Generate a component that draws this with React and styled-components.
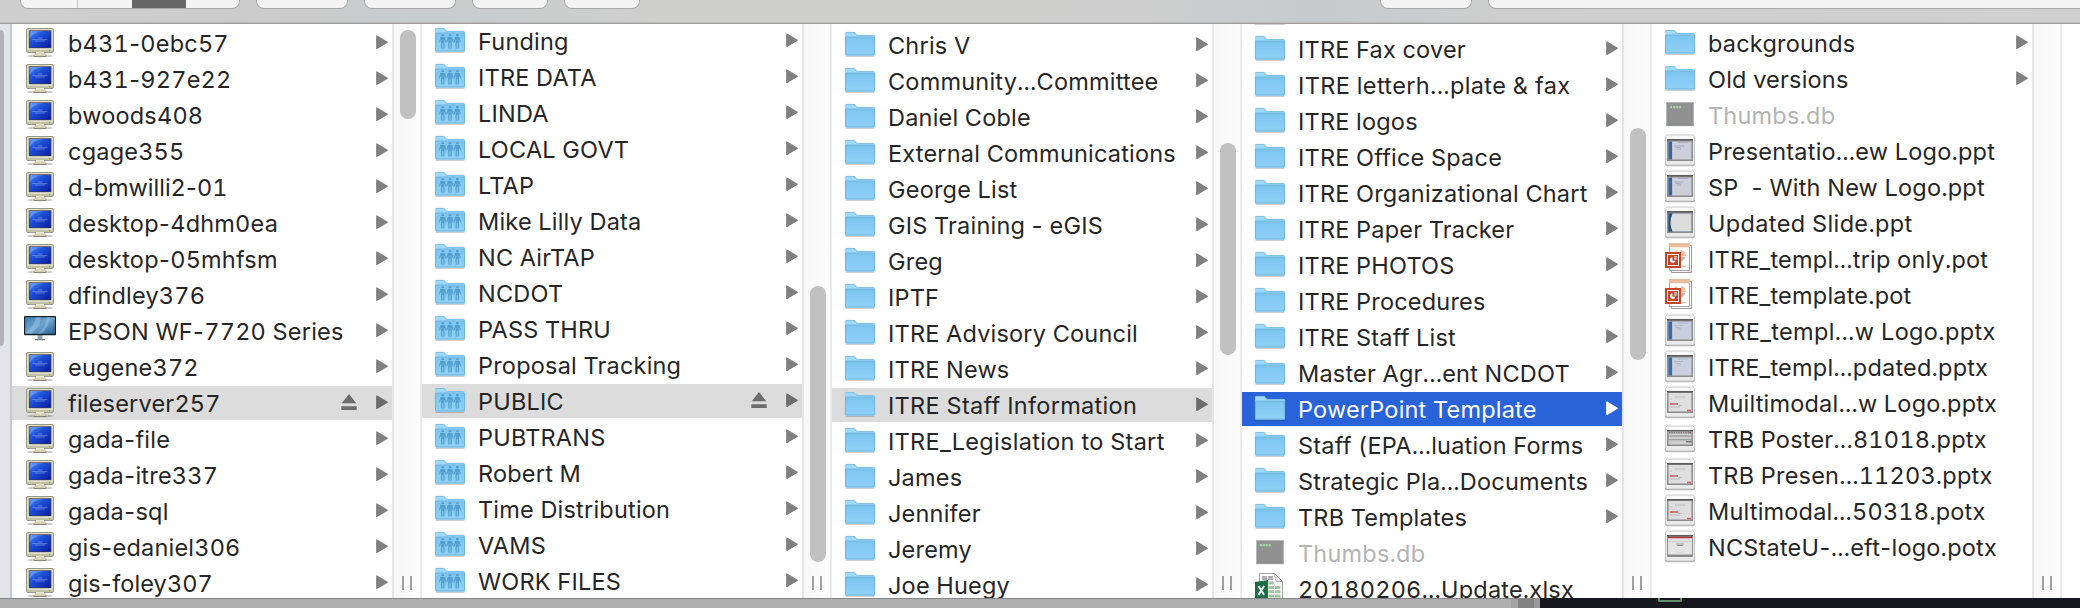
import React from "react";
import styled, { createGlobalStyle } from "styled-components";

const Global = createGlobalStyle`
  html, body { margin: 0; padding: 0; background: #fff; }
  body { width: 2080px; height: 608px; overflow: hidden; font-family: Inter, "Liberation Sans", sans-serif; }
  * { box-sizing: border-box; }
`;

const Window = styled.div`
  width: 2080px;
  height: 608px;
  display: flex;
  flex-direction: column;
  overflow: hidden;
`;

const Toolbar = styled.header`
  height: 24px;
  flex: none;
  display: flex;
  align-items: flex-start;
  gap: 16px;
  padding-left: 20px;
  background: linear-gradient(90deg, #cfcfcf, #cbcbcb 15%, #c8cccd 20%, #cfcfce 32%, #cfcfcf 55%, #c6cacc 63%, #cecece 72%, #cfcfcf);
  border-bottom: 1px solid #9d9d9d;
  box-shadow: inset 0 -1px 0 #bdbdbd;
`;

const Button = styled.div`
  flex: none;
  display: flex;
  width: ${(p) => p.$w}px;
  height: 9px;
  margin-left: ${(p) => p.$gap || 0}px;
  border: 1px solid #a9a9a9;
  border-top: 0;
  border-radius: 0 0 8px 8px;
  background: #f4f4f4;
  overflow: hidden;
`;

const Segment = styled.div`
  width: ${(p) => p.$w}px;
  height: 9px;
  background: ${(p) => (p.$active ? "#666" : "transparent")};
  border-right: ${(p) => (p.$line ? "1px solid #c4c4c4" : "0")};
`;

const Browser = styled.main`
  height: 574px;
  flex: none;
  display: flex;
  background: #fff;
`;

const Sidebar = styled.aside`
  width: 12px;
  flex: none;
  padding-top: 6px;
  background: #e3e4e9;
  border-right: 2px solid #c7c8cd;
`;

const SidebarThumb = styled.div`
  width: 4px;
  height: 316px;
  border-radius: 0 6px 6px 0;
  background: #b1b1b4;
`;

const Column = styled.section`
  width: 410px;
  flex: none;
  display: flex;
`;

const List = styled.div`
  width: 380px;
  height: 574px;
  padding-top: ${(p) => p.$top}px;
  overflow: hidden;
  display: flex;
  flex-direction: column;
  gap: 2px;
`;

const PreviousEdge = styled.div`
  height: 1px;
  width: 30px;
  margin: 0 0 5px 13px;
  flex: none;
  background: #cfd3d6;
`;

const tones = {
  blue: { bg: "#2863d9", text: "#fff", mark: "#fff" },
  gray: { bg: "#dcdcdc", text: "#242424", mark: "#6d6d6d" },
  dim: { bg: "transparent", text: "#b4b4b4", mark: "#808080" },
  plain: { bg: "transparent", text: "#262626", mark: "#808080" },
};

const Row = styled.div`
  height: 34px;
  flex: none;
  display: flex;
  align-items: flex-start;
  padding-left: 11px;
  background: ${(p) => tones[p.$tone].bg};
  color: ${(p) => tones[p.$tone].text};
`;

const Name = styled.span`
  flex: 1;
  margin-left: 11px;
  font-size: 23.5px;
  line-height: 35px;
  font-variant-numeric: tabular-nums;
  letter-spacing: ${(p) => p.$track}px;
  white-space: pre;
`;

const Hyphen = styled.span`
  margin: 0 -2px;
`;

const Icon = styled.svg`
  display: block;
  flex: none;
  width: 34px;
  height: 34px;
`;

const Mark = styled.svg`
  display: block;
  flex: none;
  width: ${(p) => p.$w}px;
  height: 34px;
  margin-right: ${(p) => p.$right}px;
`;

const Scroller = styled.div`
  width: 30px;
  flex: none;
  display: flex;
  flex-direction: column;
  align-items: flex-start;
  background: linear-gradient(90deg, #f8f8f8, #fcfcfc);
  border-left: 2px solid #e6e6e6;
  border-right: 2px solid #ebebeb;
`;

const Thumb = styled.div`
  width: 16px;
  height: ${(p) => p.$h}px;
  margin-top: ${(p) => p.$top}px;
  margin-left: 6px;
  border-radius: 8px;
  background: #c1c1c1;
`;

const Grip = styled.div`
  width: 10px;
  height: 14px;
  margin: auto 0 8px 8px;
  border-left: 2px solid #a0a0a0;
  border-right: 2px solid #a0a0a0;
`;

const Footer = styled.footer`
  height: 10px;
  flex: none;
  display: flex;
  background: #17181d;
`;

const Shelf = styled.div`
  width: ${(p) => p.$w}px;
  height: 10px;
  background: ${(p) => p.$bg};
  border-top: 1px solid #858585;
`;

const DesktopChip = styled.div`
  width: 24px;
  height: 4px;
  margin-left: 118px;
  border: 2px solid #5c8f6b;
  border-top: 0;
  border-radius: 0 0 2px 2px;
`;

const Defs = styled.svg`
  position: absolute;
  width: 0;
  height: 0;
`;

function Gradients() {
  return (
    <Defs>
      <defs>
        <linearGradient id="screen" x1="0" y1="0" x2="1" y2="1">
          <stop offset="0" stopColor="#4f86f0" />
          <stop offset=".4" stopColor="#1f4fd8" />
          <stop offset="1" stopColor="#0a1a9c" />
        </linearGradient>
        <linearGradient id="lcd" x1="0" y1="0" x2="1" y2="1">
          <stop offset="0" stopColor="#3f7fb6" />
          <stop offset=".5" stopColor="#6ea6cf" />
          <stop offset="1" stopColor="#2b5f96" />
        </linearGradient>
        <linearGradient id="folder" x1="0" y1="0" x2="0" y2="1">
          <stop offset="0" stopColor="#7cc5f0" />
          <stop offset="1" stopColor="#8fd1f8" />
        </linearGradient>
        <linearGradient id="frame" x1="0" y1="0" x2="0" y2="1">
          <stop offset="0" stopColor="#fbfbfb" />
          <stop offset="1" stopColor="#e9e9e9" />
        </linearGradient>
      </defs>
    </Defs>
  );
}

/* Every icon is drawn in a 34x34 box whose left edge is 11px into the column. */
function Crt() {
  return (
    <Icon viewBox="0 0 34 34">
      <ellipse cx="17" cy="30" rx="13" ry="1.3" fill="#000" opacity=".22" />
      <path d="M12 26h10l1 2.6 2 .8v.9H9.500v-.9l2-.8z" fill="#d2cfb6" />
      <path d="M10.500 29.500q6.500 2 13 0v.9q-6.500 1.400-13 0z" fill="#6d6b5c" />
      <rect x="3.500" y="2.500" width="27" height="24" rx="1.500" fill="#dfdcc4" stroke="#9a977f" />
      <path d="M4 24h26v2H4z" fill="#c4c1a6" />
      <path d="M13 26h8v1.500h-8z" fill="#eceadb" />
      <rect x="5" y="3.700" width="24" height="19.300" fill="#eeecd8" />
      <rect x="5.800" y="4.300" width="22.600" height="17.900" fill="#343b56" />
      <rect x="6.600" y="5.100" width="21" height="16.300" fill="url(#screen)" />
      <path d="M6.600 13C10 7 16 5.100 22 5.100H6.600z" fill="#8fb2fb" opacity=".45" />
      <path d="M9.500 13.600h15M12 15h10M15 12h4" stroke="#a8bff5" strokeWidth=".8" opacity=".55" />
      <circle cx="26.500" cy="24.700" r=".7" fill="#86a65c" />
    </Icon>
  );
}

function Lcd() {
  return (
    <Icon viewBox="0 0 34 34">
      <path d="M14.500 21h5v4.500h-5z" fill="#a3a8ac" />
      <path d="M12 25h10v1.300H12z" fill="#7f8589" />
      <rect x="1" y="2" width="32" height="19.200" rx=".8" fill="#17222d" />
      <rect x="2.200" y="3.200" width="29.600" height="16.600" fill="url(#lcd)" />
      <path d="M3 19C9 14 12 9 13 3.300h5C17 10 14 15 8 19.800zM14 19.800c6-4 9-9 10-16.500h3c-1 8-4 12-9 16.500z" fill="#a9cfe8" opacity=".4" />
    </Icon>
  );
}

function Folder({ shared }) {
  return (
    <Icon viewBox="0 0 34 34">
      <path d="M2.600 28.300h28.800" stroke="#000" strokeWidth="1.200" opacity=".2" />
      <path d="M2 5.300Q2 4 3.300 4h7.200q1 0 1.700 1l1 1.300q.5.700 1.500.700h16Q32 7 32 8.300V26.500q0 1-1 1H3q-1 0-1-1z" fill="#9dd9fb" />
      <path d="M2.400 5.500Q2.400 4.400 3.500 4.400h7q.9 0 1.500.9l1 1.300q.6.800 1.600.8h16" fill="none" stroke="#78b9dd" strokeWidth=".8" />
      <path d="M2 9h30v17.500q0 1-1 1H3q-1 0-1-1z" fill="url(#folder)" />
      <path d="M2 9h30" stroke="#6fb5df" strokeWidth=".9" />
      <path d="M2.400 9v17q0 1 1 1h27.200q1 0 1-1V9" fill="none" stroke="#69afd7" strokeWidth=".8" />
      {shared &&
        [9.700, 17, 24.300].map((x) => (
          <g key={x} transform={`translate(${x} 0)`} fill="#559fd3">
            <circle cx="0" cy="11.200" r="1.300" />
            <path d="M-2.200 13.100h4.400l1.500 5.200-.8.300-1.200-3v8.900H.5V19h-1v5.500h-1.200v-8.900l-1.200 3-.8-.3z" />
          </g>
        ))}
    </Icon>
  );
}

function Exec() {
  return (
    <Icon viewBox="0 0 34 34">
      <rect x="3" y="5" width="28" height="23.500" fill="#000" opacity=".15" />
      <rect x="3.500" y="4.500" width="27" height="22.500" fill="#919191" stroke="#b5b8b8" />
      <path d="M3.500 27h27" stroke="#707070" />
      <path d="M7 9.200h11" stroke="#9fd3a0" strokeWidth="2.200" strokeDasharray="2.200 .7" />
    </Icon>
  );
}

function Slide({ kind }) {
  const short = kind === "poster";
  const y = short ? 4.500 : 1.500;
  const h = short ? 25 : 30;
  const sy = short ? 8 : 5;
  const sh = short ? 16 : 22;
  return (
    <Icon viewBox="0 0 34 34">
      <rect x="2" y={y + .8} width="30" height={h} rx="2" fill="#000" opacity=".3" />
      <rect x="2.500" y={y - .5} width="29" height={h} rx="2" fill="url(#frame)" stroke="#c2c2c2" strokeWidth=".9" />
      <rect x="4" y={sy} width="26" height={sh} fill="#8b8b8b" />
      <rect x="4" y={sy} width="26" height="1.500" fill="#5d5d5d" />
      {kind === "blue" && (
        <>
          <rect x="5.500" y="7.500" width="23" height="18" fill="#ccced9" />
          <rect x="5.500" y="7.500" width="3.600" height="18" fill="#3a6398" />
          <path d="M15 8.500h10M11 12h10M12.500 13.500h5M14 15h4" stroke="#9ea5bf" strokeWidth=".8" />
        </>
      )}
      {kind === "pale" && (
        <>
          <rect x="5.500" y="7.500" width="23" height="18" fill="#c9cfdf" />
          <rect x="5.500" y="7.500" width="3.600" height="18" fill="#3a6ba8" />
          <path d="M15 9h10M11 11.500h9M12.500 13.500h5M14 15h4" stroke="#a9b2c6" strokeWidth=".8" />
        </>
      )}
      {kind === "curve" && (
        <>
          <rect x="5.500" y="7.500" width="23" height="18" fill="#24507f" />
          <path d="M9.500 7.500h18q1 0 1 1v16q0 1-1 1h-18q-4-9 0-18z" fill="#dcdcdc" />
        </>
      )}
      {kind === "red" && (
        <>
          <rect x="5.500" y="7" width="23" height="18.500" fill="#dedede" />
          <path d="M12 11h10M7 13h2M15 19.500h4M7 21h10" stroke="#b9b9b9" strokeWidth=".9" />
          <path d="M7 18h8M24 24.500h4" stroke="#cf5560" strokeWidth="1.600" />
        </>
      )}
      {kind === "title" && (
        <>
          <rect x="5" y="7" width="24" height="17.500" fill="#e3e3e3" />
          <path d="M5 7.500h24" stroke="#b83a3f" strokeWidth="1.600" />
          <path d="M5 11.500h24M13 22h8" stroke="#c5c5c5" strokeWidth=".8" />
          <path d="M13 14h8M14 15.500h6" stroke="#999" strokeWidth="1.200" />
        </>
      )}
      {kind === "poster" && (
        <>
          <rect x="5.500" y="9.500" width="23" height="13" fill="#cfcfcf" />
          <path d="M6 10.500h22" stroke="#777" strokeWidth="1.800" strokeDasharray="1.500 .8" />
          <path d="M5.500 14h23M5.500 17.800h23" stroke="#858585" strokeWidth=".9" />
          <path d="M23 19.800h6" stroke="#555" />
          <path d="M26 10.500h2" stroke="#b55" strokeWidth="1.500" />
        </>
      )}
    </Icon>
  );
}

function Pot() {
  return (
    <Icon viewBox="0 0 34 34">
      <path d="M8.500 3.500h20v27h-20z" fill="#fff" stroke="#9b9b9b" />
      <path d="M6.500 1.500h20v27h-20z" fill="#fff" stroke="#a3a3a3" />
      <path d="M6 1h21v4.300H6z" fill="#e9bd9b" />
      <path d="M18 8a5.500 5.500 0 0 1 4.800 6.500H17z" fill="#efc19c" />
      <path d="M14 8q-3 1-3.500 3H14z" fill="#efc19c" />
      <path d="M17 15h5.500q-1.500 3.800-5.500 5z" fill="#b9b9b9" />
      <path d="M18.500 24.700h5" stroke="#efc19c" strokeWidth="1.200" />
      <rect x="2" y="10" width="16" height="16" fill="#c4472b" />
      <rect x="4.500" y="12.500" width="11" height="11" fill="none" stroke="#fff" strokeWidth="1" />
      <path d="M9.400 15.300a2.800 2.800 0 1 0 3 3.400h-3z" fill="#fff" />
      <path d="M11 14.900h3M11 16.900h3" stroke="#fff" strokeWidth="1" />
    </Icon>
  );
}

function Xls() {
  return (
    <Icon viewBox="0 0 34 34">
      <path d="M6.500 1.500h15l8 8v24h-23z" fill="#fff" stroke="#a5a5a5" />
      <path d="M21.500 1.500l8 8h-6q-2-3-2-8z" fill="#e4e4e4" stroke="#a5a5a5" strokeWidth=".8" />
      <path d="M9 4h5v4H9zM15 4h5v4h-5z" fill="#b0b0b0" />
      <path d="M15.500 9.500h5.500v3h-5.500zM15.500 14h5.500v3h-5.500zM22 14h5.500v3H22zM15.500 18.300h5.500v3h-5.500zM22 18.300h5.500v3H22zM15.500 22.600h5.500v3h-5.500zM22 22.600h5.500v3H22zM15.500 27h5.500v3h-5.500zM22 27h5.500v3H22z" fill="#9cc79a" />
      <path d="M2 10l13-2v22L2 28z" fill="#1f6e43" />
      <path d="M5.500 14l5.500 9M11 14l-5.500 9" stroke="#fff" strokeWidth="1.900" />
    </Icon>
  );
}

const icons = {
  crt: <Crt />,
  lcd: <Lcd />,
  shared: <Folder shared />,
  folder: <Folder />,
  exec: <Exec />,
  pot: <Pot />,
  xls: <Xls />,
  blue: <Slide kind="blue" />,
  pale: <Slide kind="pale" />,
  curve: <Slide kind="curve" />,
  red: <Slide kind="red" />,
  title: <Slide kind="title" />,
  poster: <Slide kind="poster" />,
};

/* Names that need looser or tighter tracking than the default. */
const tracking = {
  "d-bmwilli2-01": 0,
  "gis-foley307": 0.1,
  "ITRE letterh...plate & fax": 0.35,
  "ITRE Staff Information": 0.3,
  "ITRE_Legislation to Start": 0.3,
  "Updated Slide.ppt": 0.35,
  "ITRE_templ...w Logo.pptx": 0.35,
};

function Entry({ name, icon, tone = "plain", eject, leaf }) {
  const color = tones[tone].mark;
  return (
    <Row $tone={tone}>
      {icons[icon]}
      <Name $track={tracking[name] ?? 0.2}>
        {name.split(/(-)/).map((part, i) => (part === "-" ? <Hyphen key={i}>-</Hyphen> : part))}
      </Name>
      {eject && (
        <Mark $w={16} $right={19} viewBox="0 0 16 34">
          <path d="M8 8l7.300 9.300H.7zM.3 20.300h15.400v3.700H.3z" fill={color} />
        </Mark>
      )}
      {!leaf && (
        <Mark $w={12} $right={4} viewBox="0 0 12 34">
          <path d="M.8 10l10.500 6.200L.8 22.400z" fill={color} stroke={color} strokeWidth="1.300" strokeLinejoin="round" />
        </Mark>
      )}
    </Row>
  );
}

const each = (icon, names) => names.map((name) => ({ name, icon }));

const columns = [
  {
    top: 2,
    thumb: [6, 89],
    items: [
      ...each("crt", ["b431-0ebc57", "b431-927e22", "bwoods408", "cgage355", "d-bmwilli2-01", "desktop-4dhm0ea", "desktop-05mhfsm", "dfindley376"]),
      { name: "EPSON WF-7720 Series", icon: "lcd" },
      { name: "eugene372", icon: "crt" },
      { name: "fileserver257", icon: "crt", tone: "gray", eject: true },
      ...each("crt", ["gada-file", "gada-itre337", "gada-sql", "gis-edaniel306", "gis-foley307"]),
    ],
  },
  {
    top: 0,
    thumb: [262, 276],
    items: [
      ...each("shared", ["Funding", "ITRE DATA", "LINDA", "LOCAL GOVT", "LTAP", "Mike Lilly Data", "NC AirTAP", "NCDOT", "PASS THRU", "Proposal Tracking"]),
      { name: "PUBLIC", icon: "shared", tone: "gray", eject: true },
      ...each("shared", ["PUBTRANS", "Robert M", "Time Distribution", "VAMS", "WORK FILES"]),
    ],
  },
  {
    top: 4,
    thumb: [119, 212],
    items: [
      ...each("folder", ["Chris V", "Community...Committee", "Daniel Coble", "External Communications", "George List", "GIS Training - eGIS", "Greg", "IPTF", "ITRE Advisory Council", "ITRE News"]),
      { name: "ITRE Staff Information", icon: "folder", tone: "gray" },
      ...each("folder", ["ITRE_Legislation to Start", "James", "Jennifer", "Jeremy", "Joe Huegy"]),
    ],
  },
  {
    top: 0,
    edge: true,
    thumb: [104, 232],
    items: [
      ...each("folder", ["ITRE Fax cover", "ITRE letterh...plate & fax", "ITRE logos", "ITRE Office Space", "ITRE Organizational Chart", "ITRE Paper Tracker", "ITRE PHOTOS", "ITRE Procedures", "ITRE Staff List", "Master Agr...ent NCDOT"]),
      { name: "PowerPoint Template", icon: "folder", tone: "blue" },
      ...each("folder", ["Staff (EPA...luation Forms", "Strategic Pla...Documents", "TRB Templates"]),
      { name: "Thumbs.db", icon: "exec", tone: "dim", leaf: true },
      { name: "20180206...Update.xlsx", icon: "xls", leaf: true },
    ],
  },
  {
    top: 2,
    items: [
      ...each("folder", ["backgrounds", "Old versions"]),
      { name: "Thumbs.db", icon: "exec", tone: "dim", leaf: true },
      { name: "Presentatio...ew Logo.ppt", icon: "blue", leaf: true },
      { name: "SP  - With New Logo.ppt", icon: "blue", leaf: true },
      { name: "Updated Slide.ppt", icon: "curve", leaf: true },
      { name: "ITRE_templ...trip only.pot", icon: "pot", leaf: true },
      { name: "ITRE_template.pot", icon: "pot", leaf: true },
      { name: "ITRE_templ...w Logo.pptx", icon: "pale", leaf: true },
      { name: "ITRE_templ...pdated.pptx", icon: "pale", leaf: true },
      { name: "Muiltimodal...w Logo.pptx", icon: "red", leaf: true },
      { name: "TRB Poster...81018.pptx", icon: "poster", leaf: true },
      { name: "TRB Presen...11203.pptx", icon: "red", leaf: true },
      { name: "Multimodal...50318.potx", icon: "red", leaf: true },
      { name: "NCStateU-...eft-logo.potx", icon: "title", leaf: true },
    ],
  },
];

export default function App() {
  return (
    <Window>
      <Global />
      <Gradients />
      <Toolbar>
        <Button $w={220}>
          <Segment $w={57} $line />
          <Segment $w={54} />
          <Segment $w={54} $active />
        </Button>
        <Button $w={92} />
        <Button $w={92} />
        <Button $w={76} />
        <Button $w={76} />
        <Button $w={92} $gap={724} />
        <Button $w={620} />
      </Toolbar>
      <Browser>
        <Sidebar>
          <SidebarThumb />
        </Sidebar>
        {columns.map((column, i) => (
          <Column key={i}>
            <List $top={column.top}>
              {column.edge && <PreviousEdge />}
              {column.items.map((item, n) => (
                <Entry key={n} {...item} />
              ))}
            </List>
            <Scroller>
              {column.thumb && <Thumb $top={column.thumb[0]} $h={column.thumb[1]} />}
              <Grip />
            </Scroller>
          </Column>
        ))}
      </Browser>
      <Footer>
        <Shelf $w={1511} $bg="#afafaf" />
        <Shelf $w={7} $bg="#a3a3a3" />
        <Shelf $w={16} $bg="#828282" />
        <Shelf $w={6} $bg="#999" />
        <DesktopChip />
      </Footer>
    </Window>
  );
}
